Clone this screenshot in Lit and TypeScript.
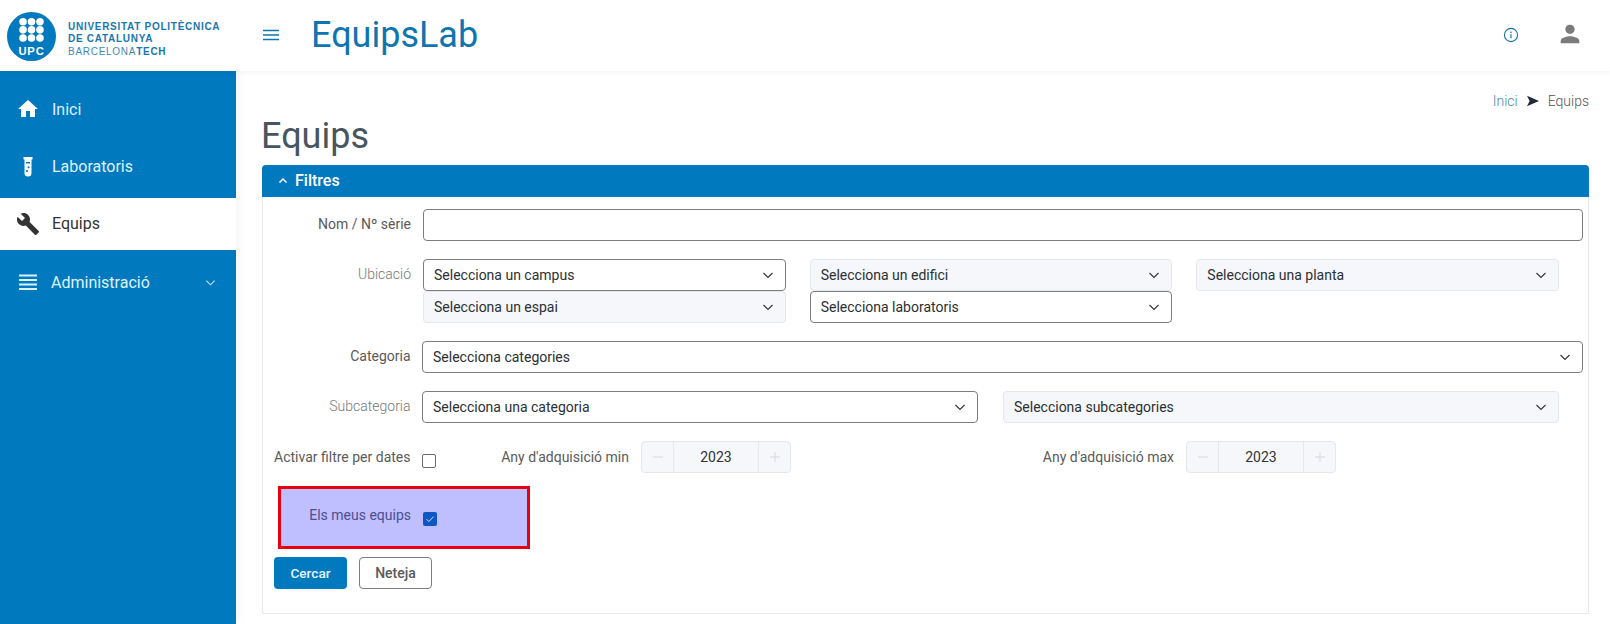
import { LitElement, html, css, svg } from "lit";
import { customElement } from "lit/decorators.js";

const chev = html`<svg class="chev" viewBox="0 0 12 12"><path d="M1.5 4l4.5 4.5L10.5 4" fill="none" stroke="currentColor" stroke-width="1.1"/></svg>`;

@customElement("app-root")
export class AppRoot extends LitElement {
  static styles = css`
    :host { display: block; width: 1610px; height: 624px; overflow: hidden; background: #fff; font-family: Roboto, "Liberation Sans", sans-serif; font-size: 14px; color: #212529; }
    * { box-sizing: border-box; }
    .top { display: flex; align-items: center; height: 71px; background: #fff; box-shadow: 0 1px 6px rgba(0,0,0,.06); position: relative; z-index: 2; }
    .logo { width: 236px; flex: none; display: flex; align-items: center; padding-left: 7px; gap: 12px; }
    .logo svg { width: 49px; height: 49px; display: block; margin-top: 2px; }
    .logotext { font-family: "Liberation Sans", Arial, sans-serif; font-size: 10px; line-height: 12.4px; letter-spacing: .72px; font-weight: 700; color: #1a76ae; white-space: nowrap; margin-top: 8px; }
    .logotext span { font-weight: 400; color: #3f88b8; }
    .logotext b { color: #1a76ae; }
    .burger { width: 16px; height: 12px; margin: 0 0 2px 27px; color: #0f75ae; display: block; }
    .brand { font-size: 36px; color: #0f75ae; margin: 0 0 2px 32px; font-weight: 400; line-height: 40px; }
    .spacer { flex: 1; }
    .info { width: 16px; height: 16px; color: #1a73a8; display: block; margin-bottom: 2px; }
    .user { width: 28px; height: 28px; margin: 0 26px 3px 37px; color: #7b7b7b; display: block; }
    .layout { display: flex; height: 553px; }
    .side { width: 236px; flex: none; background: #0079bf; padding-top: 12px; display: flex; flex-direction: column; gap: 5.5px; color: #dff3ff; font-size: 16px; box-shadow: 2px 0 10px rgba(0,0,0,.05); }
    .item { height: 52px; display: flex; align-items: center; padding-left: 18px; gap: 14px; }
    .item svg.ic { width: 20px; height: 20px; flex: none; display: block; color: #fff; }
    .item svg.home { width: 24px; height: 24px; margin-left: -2px; margin-right: -2px; }
    .item svg.lines { margin-right: -1px; }
    .item.on { background: #fff; color: #333; padding-bottom: 1px; }
    .item.on svg.ic { color: #333; width: 24px; height: 24px; margin-left: -2px; margin-right: -2px; }
    .item.admin { padding-top: 1px; }
    .item .chev { width: 11px; height: 11px; margin-left: auto; margin-right: 20px; color: #cfeaff; }
    .main { flex: 1; padding: 21px 21px 0 26px; min-width: 0; }
    .crumb { display: flex; justify-content: flex-end; align-items: center; gap: 9px; height: 18px; font-weight: 300; color: #555; }
    .crumb .l { color: #4d8bb0; }
    .crumb svg { width: 12px; height: 12px; color: #222b3a; display: block; }
    h1 { margin: 4px 0 7px -1px; font-size: 36px; line-height: 44px; font-weight: 400; color: #47555e; }
    .card { border: 1px solid #e8e8e8; border-top: none; border-radius: 4px 4px 0 0; height: 449px; margin: 0; }
    .head { height: 32px; margin: 0 -1px; background: #0079bf; color: #fff; font-weight: 500; font-size: 16px; display: flex; align-items: center; padding: 0 0 1px 16px; gap: 7px; border-radius: 4px 4px 0 0; }
    .head svg { width: 10px; height: 10px; display: block; }
    .body { padding: 12px 5px 0 0; display: flex; flex-direction: column; }
    .row { display: flex; align-items: flex-start; }
    .lab { width: 148px; flex: none; height: 32px; line-height: 30px; text-align: right; color: #5a5a5a; white-space: nowrap; }
    .lab.n { width: 147.5px; }
    .lab.light { color: #777; font-weight: 300; }
    .ctl { height: 32px; border: 1px solid #7d7d7d; border-radius: 4px; background: #fff; display: flex; align-items: center; padding: 0 11px 0 10px; color: #2b2f33; }
    input.ctl { width: 100%; outline: none; font: inherit; }
    .ctl.off { background: #f5f7fa; border-color: #e4e7ec; }
    .ctl .chev { width: 12px; height: 12px; margin-left: auto; margin-right: 0; color: #333; flex: none; }
    .f1 { flex: 1; margin-left: 12px; }
    .f2 { flex: 1; margin-left: 11.5px; }
    .r1 { margin-bottom: 18px; }
    .locs { display: grid; grid-template-columns: repeat(3, 362.67px); column-gap: 24px; margin-left: 12px; }
    .r2 { margin-bottom: 18px; }
    .r3 { margin-bottom: 18px; }
    .subs { display: grid; grid-template-columns: 556px 556px; column-gap: 25px; margin-left: 11.5px; margin-bottom: 18px; }
    .r4 { margin-bottom: 0; }
    .r4 .lab, .r4 .minlab, .r4 .maxlab { line-height: 32px; }
    .cb { width: 14px; height: 14px; border: 1px solid #6b6b6b; border-radius: 2px; background: #fff; margin-left: 11.5px; margin-top: 13px; flex: none; }
    .minlab { width: 193px; flex: none; height: 32px; text-align: right; color: #5a5a5a; white-space: nowrap; }
    .maxlab { width: 383px; flex: none; height: 32px; text-align: right; color: #5a5a5a; white-space: nowrap; }
    .num { display: flex; width: 150px; height: 32px; border: 1px solid #e4e7ec; border-radius: 4px; background: #f5f7fa; margin-left: 12px; flex: none; }
    .num .b { width: 31px; flex: none; display: flex; align-items: center; justify-content: center; color: #d3d7dd; }
    .num .b svg { width: 12px; height: 12px; display: block; }
    .num .v { flex: 1; text-align: center; line-height: 30px; border-left: 1px solid #e4e7ec; border-right: 1px solid #e4e7ec; color: #333; }
    .mine { width: 252px; height: 63px; margin: 13px 0 8px 15px; background: #bfbfff; border: 3px solid #e60012; display: flex; align-items: flex-start; padding-top: 11px; }
    .mine .lab { width: 130px; color: #4d4d8f; height: 32px; }
    .mine .check { width: 14px; height: 14px; border-radius: 2px; background: #0d56c4; margin-left: 12px; margin-top: 12px; display: flex; align-items: center; justify-content: center; color: #cfe0ff; }
    .mine .check svg { width: 10px; height: 10px; display: block; }
    .btns { display: flex; gap: 12px; margin-left: 11px; }
    .btn { width: 73px; height: 32px; border-radius: 4px; display: flex; align-items: center; justify-content: center; font-weight: 500; font-size: 14px; }
    .btn.p { background: #0079bf; color: #e6f6ff; font-size: 13.6px; }
    .btn.s { background: #fff; border: 1px solid #7d7d7d; color: #5a5a5a; }
  `;

  private sel(t: string, off = false) {
    return html`<div class="ctl ${off ? "off" : ""}"><span>${t}</span>${chev}</div>`;
  }
  private num() {
    return html`<div class="num">
      <div class="b"><svg viewBox="0 0 12 12"><path d="M1 6h10" stroke="currentColor" stroke-width="1"/></svg></div>
      <div class="v">2023</div>
      <div class="b"><svg viewBox="0 0 12 12"><path d="M1 6h10M6 1v10" stroke="currentColor" stroke-width="1"/></svg></div>
    </div>`;
  }

  render() {
    const dots = [23, 31, 39].flatMap((y) => [15.7, 24, 32.3].map((x) => svg`<circle cx=${x} cy=${y - 13.5} r="3.7" fill="#fff"/>`));
    return html`
      <header class="top">
        <div class="logo">
          <svg viewBox="0 0 48 48">
            <circle cx="24" cy="24" r="24" fill="#0079bf"/>
            ${dots}
            <text x="24" y="42" text-anchor="middle" font-family="Liberation Sans, Arial, sans-serif" font-weight="700" font-size="11" letter-spacing=".8" fill="#fff">UPC</text>
          </svg>
          <div class="logotext">UNIVERSITAT POLITÈCNICA<br>DE CATALUNYA<br><span>BARCELONA</span><b>TECH</b></div>
        </div>
        <svg class="burger" viewBox="0 0 16 12"><path d="M0 1.5h16M0 6h16M0 10.5h16" stroke="currentColor" stroke-width="1.5"/></svg>
        <div class="brand">EquipsLab</div>
        <div class="spacer"></div>
        <svg class="info" viewBox="0 0 16 16"><circle cx="8" cy="8" r="6.6" fill="none" stroke="currentColor" stroke-width="1.1"/><path d="M8 7.2v4" stroke="currentColor" stroke-width="1.2"/><circle cx="8" cy="5.2" r=".8" fill="currentColor"/></svg>
        <svg class="user" viewBox="0 0 24 24"><path fill="currentColor" d="M12 12c2.2 0 4-1.8 4-4s-1.8-4-4-4-4 1.8-4 4 1.8 4 4 4zm0 2c-2.7 0-8 1.3-8 4v2h16v-2c0-2.7-5.3-4-8-4z"/></svg>
      </header>
      <div class="layout">
        <nav class="side">
          <div class="item"><svg class="ic home" viewBox="0 0 24 24"><path fill="currentColor" d="M10 20v-6h4v6h5v-8h3L12 3 2 12h3v8z"/></svg>Inici</div>
          <div class="item"><svg class="ic" viewBox="0 0 20 20"><path fill="currentColor" fill-rule="evenodd" d="M5.5 0h9v2.6h-1V16a3.5 3.5 0 0 1-7 0V2.6h-1zM8 5v1.6h4V5zm2.6 4.3a1 1 0 1 0 .01 0zM9 13a1 1 0 1 0 .01 0z"/></svg>Laboratoris</div>
          <div class="item on"><svg class="ic" viewBox="0 0 24 24"><path fill="currentColor" d="M22.7 19l-9.1-9.1c.9-2.3.4-5-1.5-6.9-2-2-5-2.4-7.4-1.3L9 6 6 9 1.6 4.7C.4 7.1.9 10.1 2.9 12.1c1.9 1.9 4.6 2.4 6.9 1.5l9.1 9.1c.4.4 1 .4 1.4 0l2.3-2.3c.5-.4.5-1.1.1-1.4z"/></svg>Equips</div>
          <div class="item admin"><svg class="ic lines" viewBox="0 0 20 20"><path d="M1 3.5h18M1 8h18M1 12.5h18M1 17h18" stroke="#d8f3ff" stroke-width="2" fill="none"/></svg>Administració${chev}</div>
        </nav>
        <main class="main">
          <div class="crumb"><span class="l">Inici</span><svg viewBox="0 0 12 12"><path fill="currentColor" d="M0 .8L12 6 0 11.2 2.6 6z"/></svg><span>Equips</span></div>
          <h1>Equips</h1>
          <section class="card">
            <div class="head"><svg viewBox="0 0 10 10"><path d="M1.5 6.5L5 3l3.5 3.5" fill="none" stroke="currentColor" stroke-width="1.5"/></svg>Filtres</div>
            <div class="body">
              <div class="row r1"><div class="lab">Nom / Nº sèrie</div><div class="f1"><input class="ctl" /></div></div>
              <div class="row r2"><div class="lab light">Ubicació</div>
                <div class="locs">
                  ${this.sel("Selecciona un campus")}
                  ${this.sel("Selecciona un edifici", true)}
                  ${this.sel("Selecciona una planta", true)}
                  ${this.sel("Selecciona un espai", true)}
                  ${this.sel("Selecciona laboratoris")}
                </div>
              </div>
              <div class="row r3"><div class="lab n">Categoria</div><div class="f2">${this.sel("Selecciona categories")}</div></div>
              <div class="row"><div class="lab n light">Subcategoria</div>
                <div class="subs">${this.sel("Selecciona una categoria")}${this.sel("Selecciona subcategories", true)}</div>
              </div>
              <div class="row r4">
                <div class="lab n">Activar filtre per dates</div><div class="cb"></div>
                <div class="minlab">Any d'adquisició min</div>${this.num()}
                <div class="maxlab">Any d'adquisició max</div>${this.num()}
              </div>
              <div class="mine"><div class="lab">Els meus equips</div><div class="check"><svg viewBox="0 0 10 10"><path d="M1.5 5.2l2.4 2.4L8.5 2.6" fill="none" stroke="currentColor" stroke-width="1"/></svg></div></div>
              <div class="btns"><div class="btn p">Cercar</div><div class="btn s">Neteja</div></div>
            </div>
          </section>
        </main>
      </div>
    `;
  }
}
